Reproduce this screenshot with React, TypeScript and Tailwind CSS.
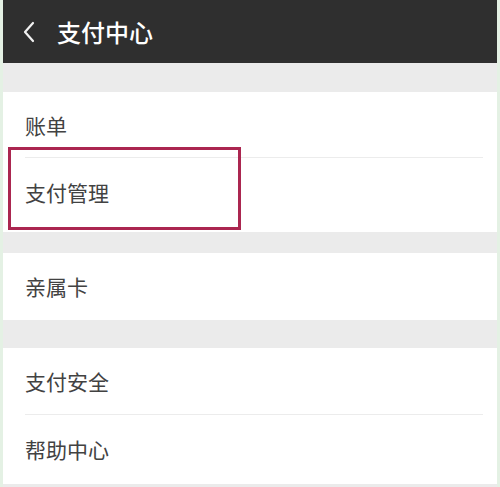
const font = { fontFamily: '"Noto Sans CJK SC", "Noto Sans", sans-serif' }

function Row({ label, h, divider }: { label: string; h: string; divider?: boolean }) {
  return (
    <div className={`relative flex items-center bg-white pl-[22px] ${h}`}>
      <span className="text-[21px] leading-none text-[#424242]">{label}</span>
      {divider && (
        <div className="absolute bottom-0 left-[22px] right-[14px] h-px bg-[#ececec]" />
      )}
    </div>
  )
}

export default function App() {
  return (
    <div className="h-[487px] w-[500px] overflow-hidden bg-[#e4f1e4] px-[3px]" style={font}>
      <div className="relative flex h-full flex-col bg-[#ebebeb]">
        <header className="flex h-[63px] items-center bg-[#2f2f2f] pl-[19px]">
          <svg width="14" height="22" viewBox="0 0 14 22" className="mr-[21px]">
            <path d="M11 2 L3 11 L11 20" fill="none" stroke="#f2f2f2" strokeWidth="2.2" strokeLinecap="round" strokeLinejoin="round" />
          </svg>
          <h1 className="text-[24px] font-medium leading-none text-white">支付中心</h1>
        </header>

        <div className="h-[29px]" />
        <Row label="账单" h="h-[66px]" divider />
        <Row label="支付管理" h="h-[74px] pb-[6px]" />

        <div className="h-[21px]" />
        <Row label="亲属卡" h="h-[67px]" />

        <div className="h-[28px]" />
        <Row label="支付安全" h="h-[67px]" divider />
        <Row label="帮助中心" h="h-[69px]" />

        <div className="pointer-events-none absolute left-[5px] top-[147px] h-[83px] w-[233px] border-[3px] border-[#ab2650]" />
      </div>
    </div>
  )
}
